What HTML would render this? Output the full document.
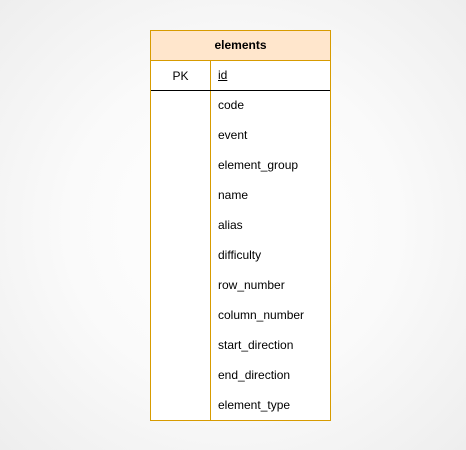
<!DOCTYPE html>
<html><head><style>
html,body{margin:0;padding:0}
body{width:466px;height:450px;position:relative;background:radial-gradient(ellipse at center,#ffffff 0%,#fafafa 50%,#eeeeee 100%);font-family:"Liberation Sans",Arial,sans-serif;font-size:12px;color:#000;overflow:hidden}
.box{position:absolute;left:150px;top:30px;width:179px;height:389px;border:1px solid #d79b00;background:#fff}
.hdr{position:absolute;left:0;top:0;width:179px;height:29px;background:#ffe6cc;border-bottom:1px solid #d79b00;text-align:center;line-height:29px;font-weight:bold}
.vl{position:absolute;left:59px;top:30px;width:1px;height:359px;background:#000}
.vl2{position:absolute;left:59px;top:30px;width:1px;height:359px;background:#d79b00}
.hl{position:absolute;left:0;top:59px;width:179px;height:1px;background:#000}
.t{position:absolute;left:67px;height:30px;line-height:30px}
.pk{position:absolute;left:0;width:59px;top:30px;height:30px;line-height:30px;text-align:center}
</style></head><body>
<div class="box">
<div class="hdr">elements</div>
<div class="vl2"></div>
<div class="hl"></div>
<div class="pk">PK</div>
<div class="t" style="top:29px;text-decoration:underline">id</div>
<div class="t" style="top:59px">code</div>
<div class="t" style="top:89px">event</div>
<div class="t" style="top:119px">element_group</div>
<div class="t" style="top:149px">name</div>
<div class="t" style="top:179px">alias</div>
<div class="t" style="top:209px">difficulty</div>
<div class="t" style="top:239px">row_number</div>
<div class="t" style="top:269px">column_number</div>
<div class="t" style="top:299px">start_direction</div>
<div class="t" style="top:329px">end_direction</div>
<div class="t" style="top:359px">element_type</div>
</div>
</body></html>
